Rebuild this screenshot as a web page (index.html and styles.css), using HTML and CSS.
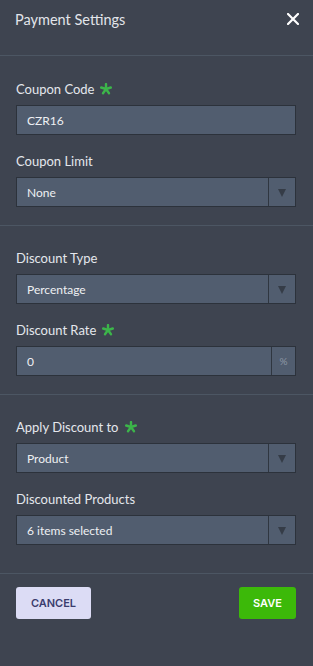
FILE: index.html
```html
<!DOCTYPE html>
<html lang="en">
<head>
    <meta charset="UTF-8">
    <meta name="viewport" content="width=device-width, initial-scale=1.0">
    <title>Payment Settings</title>
    <link rel="stylesheet" href="styles.css">
</head>
<body>

    <div class="panel">
        <!-- Header -->
        <div class="panel-header">
            <span class="panel-title">Payment Settings</span>
            <button class="close-btn" aria-label="Close">
                <svg width="12" height="12" viewBox="0 0 12 12"><path d="M1 1L11 11M11 1L1 11" stroke="#fff" stroke-width="2.2" stroke-linecap="square"/></svg>
            </button>
        </div>

        <!-- Section: coupon -->
        <div class="section first">
            <div class="field">
                <label class="field-label">Coupon Code <span class="req"><svg width="12" height="12" viewBox="0 0 12 12"><g stroke="#3cb54a" stroke-width="2.4" stroke-linecap="round"><path d="M6 6V1"/><path d="M6 6L10.8 4.5"/><path d="M6 6L9 10.2"/><path d="M6 6L3 10.2"/><path d="M6 6L1.2 4.5"/></g></svg></span></label>
                <div class="input-box"><span class="input-value">CZR16</span></div>
            </div>
            <div class="field">
                <label class="field-label">Coupon Limit</label>
                <div class="input-box select"><span class="input-value">None</span><span class="addon"><span class="caret"></span></span></div>
            </div>
        </div>

        <!-- Section: discount -->
        <div class="section">
            <div class="field">
                <label class="field-label">Discount Type</label>
                <div class="input-box select"><span class="input-value">Percentage</span><span class="addon"><span class="caret"></span></span></div>
            </div>
            <div class="field">
                <label class="field-label">Discount Rate <span class="req"><svg width="12" height="12" viewBox="0 0 12 12"><g stroke="#3cb54a" stroke-width="2.4" stroke-linecap="round"><path d="M6 6V1"/><path d="M6 6L10.8 4.5"/><path d="M6 6L9 10.2"/><path d="M6 6L3 10.2"/><path d="M6 6L1.2 4.5"/></g></svg></span></label>
                <div class="input-box"><span class="input-value">0</span><span class="addon percent">%</span></div>
            </div>
        </div>

        <!-- Section: apply to -->
        <div class="section last">
            <div class="field">
                <label class="field-label">Apply Discount to <span class="req"><svg width="12" height="12" viewBox="0 0 12 12"><g stroke="#3cb54a" stroke-width="2.4" stroke-linecap="round"><path d="M6 6V1"/><path d="M6 6L10.8 4.5"/><path d="M6 6L9 10.2"/><path d="M6 6L3 10.2"/><path d="M6 6L1.2 4.5"/></g></svg></span></label>
                <div class="input-box select"><span class="input-value">Product</span><span class="addon"><span class="caret"></span></span></div>
            </div>
            <div class="field">
                <label class="field-label">Discounted Products</label>
                <div class="input-box select"><span class="input-value">6 items selected</span><span class="addon"><span class="caret"></span></span></div>
            </div>
        </div>

        <!-- Footer -->
        <div class="panel-footer">
            <button class="btn btn-cancel">Cancel</button>
            <button class="btn btn-save">Save</button>
        </div>
    </div>

</body>
</html>
```

FILE: styles.css
```css
/* --- Base --- */
* {
    margin: 0;
    padding: 0;
    box-sizing: border-box;
}

body {
    font-family: 'Lato', 'Liberation Sans', sans-serif;
    background-color: #3e4450;
    color: #e4e7ec;
    -webkit-font-smoothing: antialiased;
}

/* --- Panel --- */
.panel {
    width: 313px;
    min-height: 666px;
    background-color: #3e4450;
}

.panel-header {
    height: 56px;
    padding: 0 14px 0 15px;
    display: flex;
    justify-content: space-between;
    align-items: flex-start;
    border-bottom: 1px solid #4c5663;
}

.panel-title {
    margin-top: 10px;
    font-size: 14.5px;
    line-height: 20px;
    color: #e2e5ea;
}

.close-btn {
    margin-top: 13px;
    background: none;
    border: none;
    cursor: pointer;
    display: flex;
}

/* --- Sections --- */
.section {
    padding: 23px 17px 18px 16px;
    border-bottom: 1px solid #4c5663;
    display: flex;
    flex-direction: column;
    gap: 17px;
}

.section.first {
    padding-top: 24px;
}

.section.last {
    padding-bottom: 28px;
}

.field-label {
    display: flex;
    align-items: center;
    gap: 6px;
    font-size: 13px;
    line-height: 18px;
    color: #e4e7ec;
    margin-bottom: 7px;
}

.req {
    display: flex;
}

.input-box {
    height: 30px;
    display: flex;
    align-items: stretch;
    background-color: #515d6f;
    border: 1px solid #2c323b;
}

.input-value {
    flex: 1;
    display: flex;
    align-items: center;
    padding-left: 10px;
    font-size: 12px;
    color: #eef0f3;
}

.addon {
    width: 27px;
    border-left: 1px solid #2f3640;
    display: flex;
    align-items: center;
    justify-content: center;
}

.addon.percent {
    width: 24px;
    font-size: 10px;
    color: #8d97a6;
}

.caret {
    width: 0;
    height: 0;
    border-left: 4.5px solid transparent;
    border-right: 4.5px solid transparent;
    border-top: 8px solid #353c47;
    margin-top: 2px;
}

/* --- Footer --- */
.panel-footer {
    padding: 13px 17px 0 16px;
    display: flex;
    justify-content: space-between;
}

.btn {
    height: 32px;
    border: none;
    border-radius: 3px;
    font-family: 'Inter', 'Liberation Sans', sans-serif;
    font-size: 11px;
    font-weight: 600;
    text-transform: uppercase;
    cursor: pointer;
}

.btn-cancel {
    width: 75px;
    background-color: #dcdcf5;
    color: #3b3d6e;
}

.btn-save {
    width: 57px;
    background-color: #3cb909;
    color: #ffffff;
}
```
